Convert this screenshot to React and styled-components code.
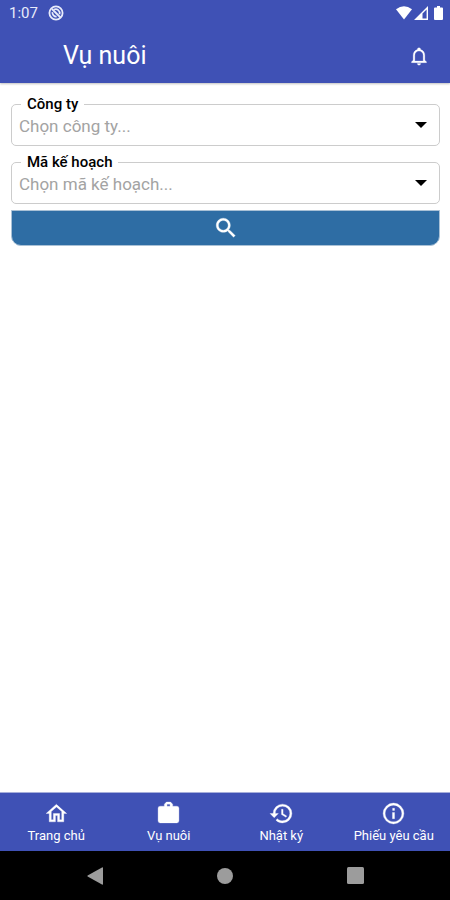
import React, { useState } from "react";
import styled, { createGlobalStyle } from "styled-components";

const icons = {
  bell: "M10 21H14C14 22.1 13.1 23 12 23S10 22.1 10 21M21 19V20H3V19L5 17V11C5 7.9 7 5.2 10 4.3V4C10 2.9 10.9 2 12 2S14 2.9 14 4V4.3C17 5.2 19 7.9 19 11V17L21 19M17 11C17 8.2 14.8 6 12 6S7 8.2 7 11V18H17V11Z",
  search:
    "M15.5 14h-.79l-.28-.27C15.41 12.59 16 11.11 16 9.5 16 5.91 13.09 3 9.5 3S3 5.91 3 9.5 5.91 16 9.5 16c1.61 0 3.09-.59 4.23-1.57l.27.28v.79l5 4.99L20.49 19l-4.99-5zm-6 0C7.01 14 5 11.99 5 9.5S7.01 5 9.5 5 14 7.01 14 9.5 11.99 14 9.5 14z",
  home: "M12 5.69L17 10.19V18H15V12H9V18H7V10.19L12 5.69M12 3L2 12H5V20H11V14H13V20H19V12H22",
  briefcase:
    "M10 1H14L16 3V5H20A2 2 0 0 1 22 7V19A2 2 0 0 1 20 21H4A2 2 0 0 1 2 19V7A2 2 0 0 1 4 5H8V3L10 1M13.5 5V3H10.5V5H13.5Z",
  history:
    "M13.5 8H12V13L16.28 15.54L17 14.33L13.5 12.25V8M13 3A9 9 0 0 0 4 12H1L4.96 16.03L9 12H6A7 7 0 0 1 13 5A7 7 0 0 1 20 12A7 7 0 0 1 13 19C11.07 19 9.32 18.21 8.06 16.94L6.64 18.36C8.27 20 10.5 21 13 21A9 9 0 0 0 22 12A9 9 0 0 0 13 3",
  info: "M11 9H13V7H11M12 20C7.59 20 4 16.41 4 12S7.59 4 12 4 20 7.59 20 12 16.41 20 12 20M12 2A10 10 0 0 0 12 22A10 10 0 0 0 12 2M11 17H13V11H11V17Z",
};

const tabs = [
  { id: "home", label: "Trang chủ", icon: "home" },
  { id: "crop", label: "Vụ nuôi", icon: "briefcase" },
  { id: "diary", label: "Nhật ký", icon: "history" },
  { id: "request", label: "Phiếu yêu cầu", icon: "info" },
];

function Icon({ name, size = 24 }) {
  return (
    <svg
      width={size}
      height={size}
      viewBox="0 0 24 24"
      fill="currentColor"
      fillRule="evenodd"
      stroke="currentColor"
      strokeWidth="0.3"
      aria-hidden="true"
    >
      <path d={icons[name]} />
    </svg>
  );
}

function SelectField({ id, label, placeholder }) {
  return (
    <Field>
      <FieldLabel htmlFor={id}>{label}</FieldLabel>
      <Select id={id} defaultValue="">
        <option value="">{placeholder}</option>
      </Select>
      <Caret width="12" height="6" viewBox="0 0 12 6" aria-hidden="true">
        <path d="M0 0H12L6 6Z" />
      </Caret>
    </Field>
  );
}

function StatusBar() {
  return (
    <Status>
      <StatusGroup>
        <span>1:07</span>
        <svg width="16" height="16" viewBox="0 0 16 16" fill="none" stroke="currentColor">
          <circle cx="8" cy="8" r="6.6" strokeWidth="1.8" />
          <path d="M4 4L12.5 12.5" strokeWidth="1.8" />
          <path d="M6 4.6A4 4 0 0 1 11.6 9.2" strokeWidth="1.7" />
          <path d="M4.4 7.2A4 4 0 0 0 8.6 11.6" strokeWidth="1.7" />
        </svg>
      </StatusGroup>
      <StatusIcons>
        <svg width="16" height="14" viewBox="0 0 16 14" fill="currentColor">
          <path d="M0 3.2Q8 -2.6 16 3.2L8 13.5Z" />
        </svg>
        <svg width="14" height="14" viewBox="0 0 14 14" fill="currentColor" fillRule="evenodd">
          <path d="M0 14L14 0V14ZM8.5 7.5V12.6H12.6V3.4Z" />
        </svg>
        <Battery width="9" height="14" viewBox="0 0 9 14" fill="currentColor">
          <path d="M3 0H6V1.5H8Q9 1.5 9 2.5V13Q9 14 8 14H1Q0 14 0 13V2.5Q0 1.5 1 1.5H3Z" />
        </Battery>
      </StatusIcons>
    </Status>
  );
}

function App() {
  const [active, setActive] = useState("crop");

  return (
    <Screen>
      <GlobalStyle />
      <Header>
        <StatusBar />
        <TitleBar>
          <h1>Vụ nuôi</h1>
          <IconButton type="button" aria-label="Thông báo">
            <Icon name="bell" size={20} />
          </IconButton>
        </TitleBar>
      </Header>

      <Form onSubmit={(e) => e.preventDefault()}>
        <SelectField id="company" label="Công ty" placeholder="Chọn công ty..." />
        <SelectField
          id="plan"
          label="Mã kế hoạch"
          placeholder="Chọn mã kế hoạch..."
        />
        <SearchButton type="submit" aria-label="Tìm kiếm">
          <Icon name="search" size={26} />
        </SearchButton>
      </Form>

      <TabBar>
        {tabs.map(({ id, label, icon }) => (
          <Tab
            key={id}
            type="button"
            aria-current={active === id ? "page" : undefined}
            onClick={() => setActive(id)}
          >
            <Icon name={icon} size={25} />
            <span>{label}</span>
          </Tab>
        ))}
      </TabBar>

      <SystemBar>
        <SystemButton type="button" aria-label="Quay lại">
          <svg width="16" height="18" viewBox="0 0 16 18" fill="currentColor">
            <path d="M15 0.5Q16 0 16 1V17Q16 18 15 17.5L0.6 9.6Q0 9 0.6 8.4Z" />
          </svg>
        </SystemButton>
        <SystemButton type="button" aria-label="Màn hình chính">
          <svg width="16" height="16" viewBox="0 0 16 16" fill="currentColor">
            <circle cx="8" cy="8" r="8" />
          </svg>
        </SystemButton>
        <SystemButton type="button" aria-label="Ứng dụng gần đây">
          <svg width="17" height="17" viewBox="0 0 17 17" fill="currentColor">
            <rect width="17" height="17" rx="1.5" />
          </svg>
        </SystemButton>
      </SystemBar>
    </Screen>
  );
}

const GlobalStyle = createGlobalStyle`
  * {
    box-sizing: border-box;
  }
  body {
    margin: 0;
    background: #fff;
    font-family: Roboto, "Noto Sans", sans-serif;
  }
  button,
  select {
    font-family: inherit;
  }
  svg {
    display: block;
    flex-shrink: 0;
  }
`;
const Screen = styled.div`
  display: flex;
  flex-direction: column;
  min-height: 100vh;
`;
const Header = styled.header`
  background: #3f51b5;
  color: #fff;
  box-shadow: 0 1px 2px rgb(0 0 0 / 25%);
`;
const Status = styled.div`
  display: flex;
  justify-content: space-between;
  align-items: center;
  height: 26px;
  padding: 0 7px 0 9px;
  font-size: 15px;
  color: #e8ebfa;
`;
const StatusGroup = styled.div`
  display: flex;
  align-items: center;
  gap: 10px;
`;
const StatusIcons = styled.div`
  display: flex;
  align-items: center;
  gap: 2px;
  color: #fff;
`;
const Battery = styled.svg`
  margin-left: 4px;
`;
const TitleBar = styled.div`
  display: flex;
  justify-content: space-between;
  align-items: center;
  height: 57px;
  padding: 2px 21px 0 63px;
  h1 {
    margin: 0;
    font-size: 25px;
    font-weight: 400;
    line-height: 30px;
  }
`;
const IconButton = styled.button`
  padding: 0;
  border: none;
  background: none;
  color: #fff;
  cursor: pointer;
`;
const Form = styled.form`
  flex: 1;
  padding: 21px 10px 0 11px;
`;
const Field = styled.div`
  position: relative;
  margin-bottom: 16px;
  & + & {
    margin-bottom: 6px;
  }
`;
const FieldLabel = styled.label`
  position: absolute;
  top: -9px;
  left: 10px;
  padding: 0 6px;
  background: #fff;
  font-size: 15px;
  font-weight: 500;
  line-height: 18px;
  color: #000;
`;
const Select = styled.select`
  display: block;
  width: 100%;
  height: 42px;
  padding: 2px 36px 0 7px;
  border: 1px solid #ccc;
  border-radius: 5px;
  background: #fff;
  font-size: 17px;
  color: #a3a3a3;
  appearance: none;
`;
const Caret = styled.svg`
  position: absolute;
  top: 18px;
  right: 13px;
  pointer-events: none;
`;
const SearchButton = styled.button`
  display: flex;
  justify-content: center;
  align-items: center;
  width: 100%;
  height: 36px;
  padding: 0;
  border: 1px solid #a9c1d6;
  border-radius: 0 0 10px 10px;
  background: #2e6da4;
  color: #fff;
  cursor: pointer;
`;
const TabBar = styled.nav`
  display: grid;
  grid-template-columns: repeat(4, 1fr);
  height: 59px;
  border-top: 1px solid #a6aedb;
  background: #3f51b5;
`;
const Tab = styled.button`
  display: flex;
  flex-direction: column;
  align-items: center;
  gap: 2px;
  padding: 8px 0 0;
  border: none;
  background: none;
  font-size: 13px;
  line-height: 16px;
  white-space: nowrap;
  color: #fff;
  cursor: pointer;
`;
const SystemBar = styled.div`
  display: flex;
  justify-content: center;
  align-items: center;
  height: 49px;
  background: #000;
`;
const SystemButton = styled.button`
  display: flex;
  justify-content: center;
  width: 29%;
  padding: 0;
  border: none;
  background: none;
  color: #9c9c9c;
`;

export default App;
